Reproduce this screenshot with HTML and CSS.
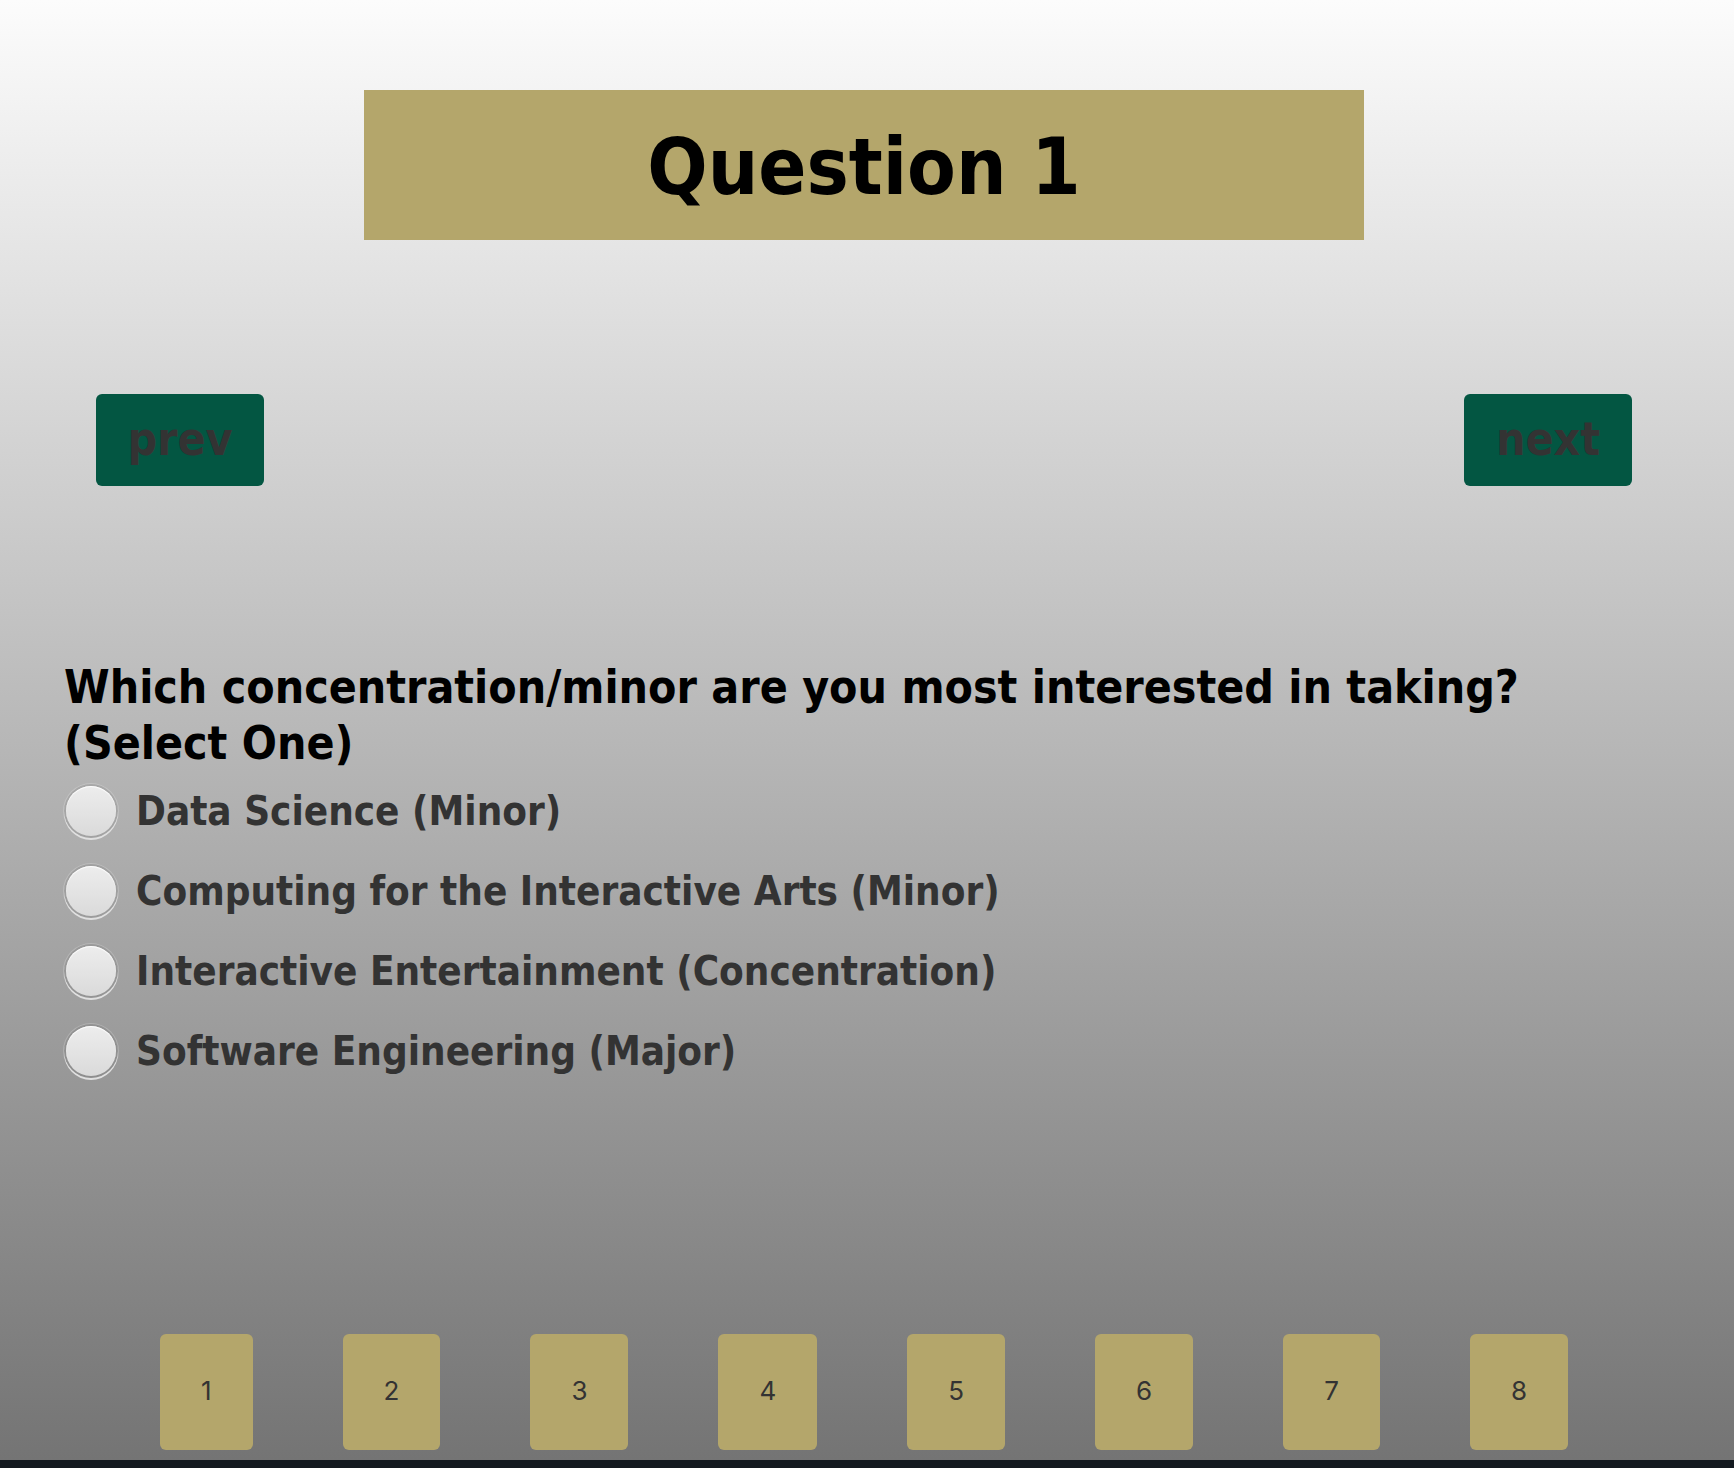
FILE: index.html
```html
<!DOCTYPE html>
<html lang="en">
<head>
  <meta charset="utf-8">
  <title>Question 1</title>
  <link rel="stylesheet" href="styles.css">
</head>
<body>
  <main class="quiz">
    <h1 class="title">Question 1</h1>
    <nav class="steps" aria-label="Previous and next question">
      <button class="step" type="button">prev</button>
      <button class="step" type="button">next</button>
    </nav>
    <fieldset class="question">
      <legend class="prompt">Which concentration/minor are you most interested in taking?<br>(Select One)</legend>
      <label class="option"><input class="radio" type="radio" name="answer">Data Science (Minor)</label>
      <label class="option"><input class="radio" type="radio" name="answer">Computing for the Interactive Arts (Minor)</label>
      <label class="option"><input class="radio" type="radio" name="answer">Interactive Entertainment (Concentration)</label>
      <label class="option"><input class="radio" type="radio" name="answer">Software Engineering (Major)</label>
    </fieldset>
    <nav class="pages" aria-label="Questions">
      <button class="page" type="button">1</button>
      <button class="page" type="button">2</button>
      <button class="page" type="button">3</button>
      <button class="page" type="button">4</button>
      <button class="page" type="button">5</button>
      <button class="page" type="button">6</button>
      <button class="page" type="button">7</button>
      <button class="page" type="button">8</button>
    </nav>
  </main>
</body>
</html>
```
FILE: styles.css
```css
* {
  box-sizing: border-box;
}

body {
  display: flex;
  min-height: 100vh;
  margin: 0;
  padding-bottom: 8px;
  background: #141a20;
  font-family: Tahoma, "DejaVu Sans Condensed", "DejaVu Sans", sans-serif;
  font-weight: bold;
}

.quiz {
  display: flex;
  flex: 1;
  flex-direction: column;
  padding: 90px 6px 10px 0;
  background: linear-gradient(#fcfcfc, #747474);
}

.title {
  width: 58%;
  max-width: 1000px;
  margin: 0 auto;
  padding-top: 4px;
  background: #b4a66b;
  font-size: 79px;
  line-height: 146px;
  text-align: center;
}

.steps {
  display: flex;
  justify-content: space-between;
  margin-top: 154px;
  padding: 0 96px;
}

.step {
  width: 168px;
  height: 92px;
  padding: 0 0 2px;
  border: 0;
  border-radius: 6px;
  background: #035642;
  color: #333;
  font: inherit;
  font-size: 46px;
}

.question {
  margin: 173px 0 0;
  padding: 0 64px;
  border: 0;
}

.prompt {
  padding: 0;
  font-size: 46px;
  line-height: 56px;
}

.option {
  display: flex;
  align-items: center;
  gap: 18px;
  height: 80px;
  color: #333;
  font-size: 40px;
}

.radio {
  flex: none;
  width: 54px;
  height: 54px;
  margin: 0;
  appearance: none;
  border: 2px solid rgba(0, 0, 0, 0.06);
  border-radius: 50%;
  background: linear-gradient(#ededed, #dadada) padding-box;
  box-shadow: inset 0 1px 1px #fff, 0 2px 0 #e0e0e0, 0 0 0 1px rgba(255, 255, 255, 0.2);
}

.radio:checked {
  background: radial-gradient(#333 0 12px, #e4e4e4 13px) padding-box;
}

.pages {
  display: flex;
  justify-content: center;
  gap: 90px;
  margin-top: auto;
}

.page {
  height: 116px;
  padding: 0 41px 4px;
  border: 0;
  border-radius: 6px;
  background: #b4a66b;
  color: #333;
  font-family: Inter, sans-serif;
  font-size: 26px;
}
```
